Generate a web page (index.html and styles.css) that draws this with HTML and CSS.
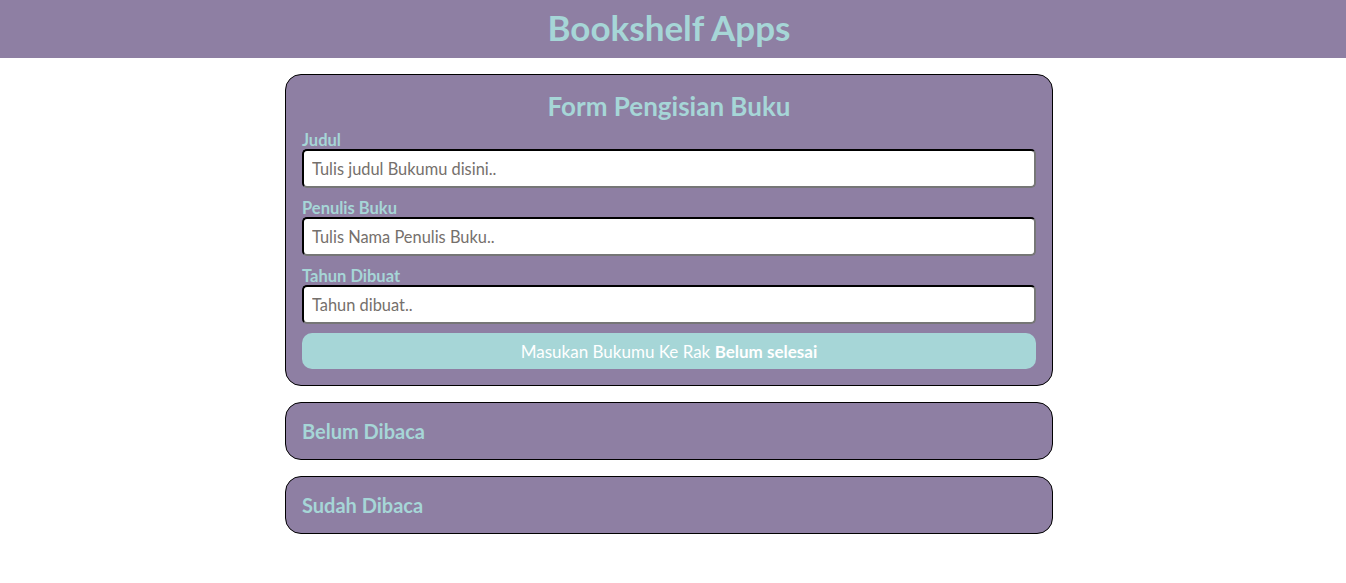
FILE: index.html
```html
<!DOCTYPE html>
<html lang="id">
<head>
<meta charset="utf-8">
<title>Bookshelf Apps</title>
<link rel="stylesheet" href="styles.css">
</head>
<body>
<header class="app-header">
  <h1 class="app-title">Bookshelf Apps</h1>
</header>
<main class="container">
  <section class="card form-card">
    <h2 class="card-title">Form Pengisian Buku</h2>
    <form class="book-form">
      <div class="field">
        <label class="field-label" for="judul">Judul</label>
        <input class="field-input" id="judul" type="text" placeholder="Tulis judul Bukumu disini..">
      </div>
      <div class="field">
        <label class="field-label" for="penulis">Penulis Buku</label>
        <input class="field-input" id="penulis" type="text" placeholder="Tulis Nama Penulis Buku..">
      </div>
      <div class="field">
        <label class="field-label" for="tahun">Tahun Dibuat</label>
        <input class="field-input" id="tahun" type="text" placeholder="Tahun dibuat..">
      </div>
      <button class="submit-btn" type="button">Masukan Bukumu Ke Rak <strong>Belum selesai</strong></button>
    </form>
  </section>
  <section class="card shelf-card">
    <h3 class="shelf-title">Belum Dibaca</h3>
  </section>
  <section class="card shelf-card">
    <h3 class="shelf-title">Sudah Dibaca</h3>
  </section>
</main>
</body>
</html>
```
FILE: styles.css
```css
* { box-sizing: border-box; }
body {
  margin: 0;
  padding-right: 8px;
  font-family: Lato, "Noto Sans", sans-serif;
  background: #ffffff;
}
.app-header {
  background: #8e7fa3;
  height: 58px;
  display: flex;
  align-items: center;
  justify-content: center;
  margin-right: -8px;
  padding-right: 8px;
  padding-bottom: 4px;
}
.app-title {
  margin: 0;
  color: #a6d6d7;
  font-size: 35px;
  font-weight: 700;
  line-height: 40px;
}
.container {
  width: 768px;
  margin: 16px auto 0;
  display: flex;
  flex-direction: column;
  gap: 16px;
}
.card {
  background: #8e7fa3;
  border: 1px solid #000;
  border-radius: 16px;
  padding: 16px;
}
.card-title {
  margin: 0 0 10px;
  text-align: center;
  color: #a6d6d7;
  font-size: 26px;
  line-height: 30px;
  font-weight: 700;
}
.book-form {
  display: flex;
  flex-direction: column;
}
.field { margin-bottom: 11px; display: flex; flex-direction: column; }
.field:nth-child(3) { margin-bottom: 9px; }
.field-label {
  color: #a6d6d7;
  font-size: 16.5px;
  font-weight: 700;
  line-height: 18px;
}
.field-input {
  height: 39px;
  border: 2px inset;
  border-color: #1f1f1f #767676 #767676 #1f1f1f;
  border-radius: 5px;
  padding: 0 8px;
  font-family: inherit;
  font-size: 16.4px;
  background: #fff;
}
.field-input::placeholder { color: #75706c; }
.submit-btn {
  height: 36px;
  border: none;
  border-radius: 10px;
  background: #a6d6d7;
  color: #fff;
  font-family: inherit;
  font-size: 17px;
}
.submit-btn strong { font-weight: 700; }
.shelf-card { padding: 16px; }
.shelf-title {
  margin: 0;
  color: #a6d6d7;
  font-size: 20px;
  line-height: 24px;
  font-weight: 700;
}
```
